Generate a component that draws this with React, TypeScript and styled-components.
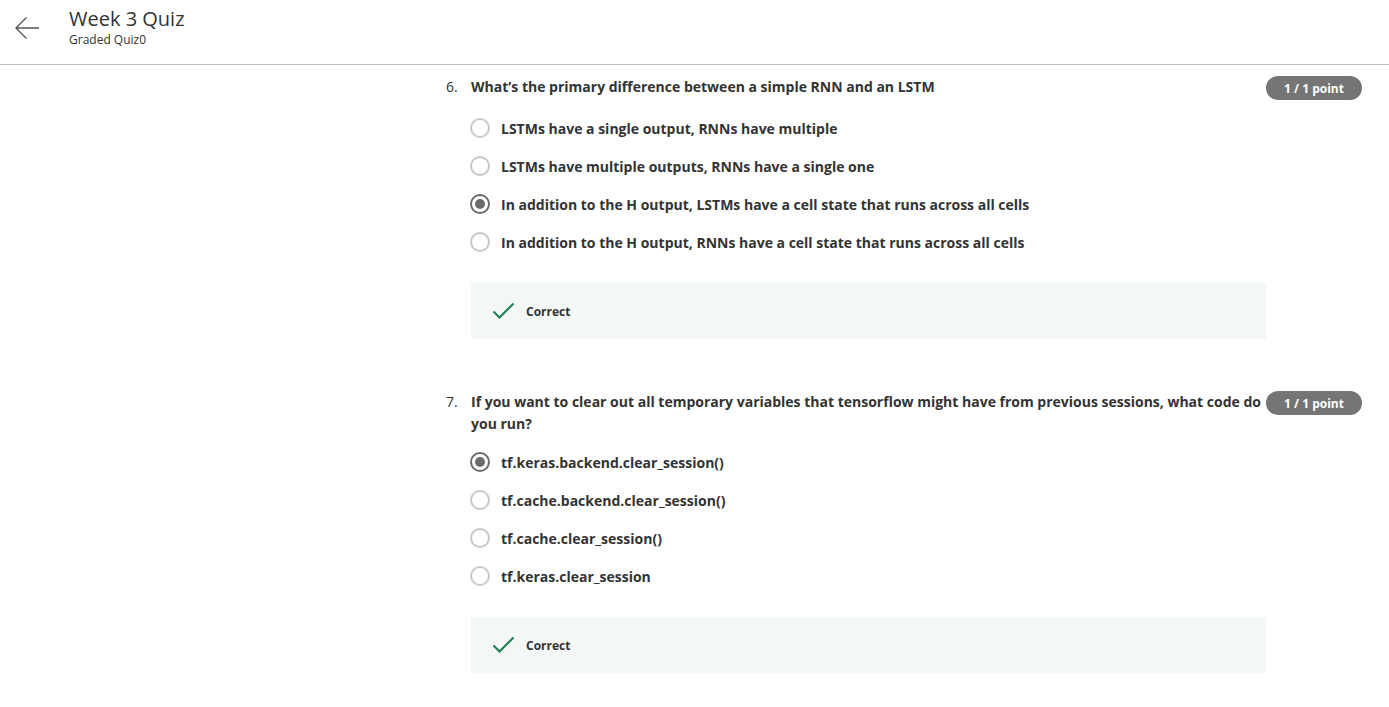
import React from "react";
import styled, { createGlobalStyle } from "styled-components";

const Global = createGlobalStyle`
  html, body { margin: 0; padding: 0; background: #fff; }
  body { font-family: "Open Sans", "Noto Sans", sans-serif; color: #333; }
`;

const Header = styled.header`
  height: 64px;
  border-bottom: 1px solid #bdbdbd;
  display: flex;
  align-items: flex-start;
`;

const BackButton = styled.div`
  width: 69px;
  padding-top: 16px;
  padding-left: 14px;
  box-sizing: border-box;
  display: flex;
`;

const TitleBlock = styled.div`
  display: flex;
  flex-direction: column;
  padding-top: 6px;
`;

const Title = styled.h1`
  margin: 0;
  font-size: 20px;
  font-weight: 400;
  line-height: 26px;
  color: #333;
`;

const Subtitle = styled.div`
  font-size: 12px;
  line-height: 16px;
  color: #333;
`;

const Main = styled.main`
  margin-left: 446px;
  width: 916px;
  padding-top: 11px;
  display: flex;
  flex-direction: column;
  gap: 52px;
`;

const Question = styled.section`
  display: flex;
`;

const Number = styled.div`
  width: 25px;
  flex: none;
  font-size: 14px;
  line-height: 22px;
`;

const Body = styled.div`
  flex: 1;
  display: flex;
  flex-direction: column;
`;

const PromptRow = styled.div`
  display: flex;
  align-items: flex-start;
  margin-bottom: 17px;
`;

const Prompt = styled.div`
  width: 795px;
  flex: none;
  font-size: 14px;
  font-weight: 700;
  line-height: 22px;
  color: #333;
`;

const Badge = styled.div`
  width: 96px;
  height: 24px;
  margin-bottom: 1px;
  flex: none;
  border-radius: 12px;
  background: #757575;
  color: #fff;
  font-size: 12px;
  font-weight: 700;
  display: flex;
  align-items: center;
  justify-content: center;
`;

const Options = styled.div`
  display: flex;
  flex-direction: column;
  gap: 18px;
  margin-left: -1px;
`;

const Option = styled.label`
  display: flex;
  align-items: center;
  height: 20px;
  font-size: 14px;
  font-weight: 700;
  color: #333;
  gap: 11px;
`;

const Radio = styled.span<{ $checked?: boolean }>`
  width: 20px;
  height: 20px;
  box-sizing: border-box;
  border-radius: 50%;
  border: 2px solid ${(p) => (p.$checked ? "#6b6b6b" : "#c8c8c8")};
  display: flex;
  align-items: center;
  justify-content: center;
  flex: none;
  &::after {
    content: "";
    display: ${(p) => (p.$checked ? "block" : "none")};
    width: 10px;
    height: 10px;
    border-radius: 50%;
    background: #6b6b6b;
  }
`;

const Feedback = styled.div`
  width: 795px;
  box-sizing: border-box;
  margin-top: 31px;
  height: 56px;
  background: #f3f8f6;
  display: flex;
  align-items: center;
  padding-left: 21px;
  gap: 11px;
  font-size: 12px;
  font-weight: 700;
  color: #333;
`;

const Check = () => (
  <svg width="23" height="18" viewBox="0 0 23 18" fill="none">
    <path d="M1.5 9.5 L7.5 15.5 L21.5 1.5" stroke="#1f8354" strokeWidth="2.2" />
  </svg>
);

const Arrow = () => (
  <svg width="26" height="24" viewBox="0 0 26 24" fill="none">
    <path d="M25 12 H2 M12.5 1.5 L2 12 L12.5 22.5" stroke="#555" strokeWidth="1.3" />
  </svg>
);

type Q = { n: number; text: string; options: string[]; selected: number };

const questions: Q[] = [
  {
    n: 6,
    text: "What’s the primary difference between a simple RNN and an LSTM",
    options: [
      "LSTMs have a single output, RNNs have multiple",
      "LSTMs have multiple outputs, RNNs have a single one",
      "In addition to the H output, LSTMs have a cell state that runs across all cells",
      "In addition to the H output, RNNs have a cell state that runs across all cells",
    ],
    selected: 2,
  },
  {
    n: 7,
    text: "If you want to clear out all temporary variables that tensorflow might have from previous sessions, what code do you run?",
    options: [
      "tf.keras.backend.clear_session()",
      "tf.cache.backend.clear_session()",
      "tf.cache.clear_session()",
      "tf.keras.clear_session",
    ],
    selected: 0,
  },
];

export default function App() {
  return (
    <>
      <Global />
      <Header>
        <BackButton>
          <Arrow />
        </BackButton>
        <TitleBlock>
          <Title>Week 3 Quiz</Title>
          <Subtitle>Graded Quiz0</Subtitle>
        </TitleBlock>
      </Header>
      <Main>
        {questions.map((q) => (
          <Question key={q.n}>
            <Number>{q.n}.</Number>
            <Body>
              <PromptRow>
                <Prompt>{q.text}</Prompt>
                <Badge>1 / 1 point</Badge>
              </PromptRow>
              <Options>
                {q.options.map((o, i) => (
                  <Option key={i}>
                    <Radio $checked={i === q.selected} />
                    {o}
                  </Option>
                ))}
              </Options>
              <Feedback>
                <Check />
                Correct
              </Feedback>
            </Body>
          </Question>
        ))}
      </Main>
    </>
  );
}
